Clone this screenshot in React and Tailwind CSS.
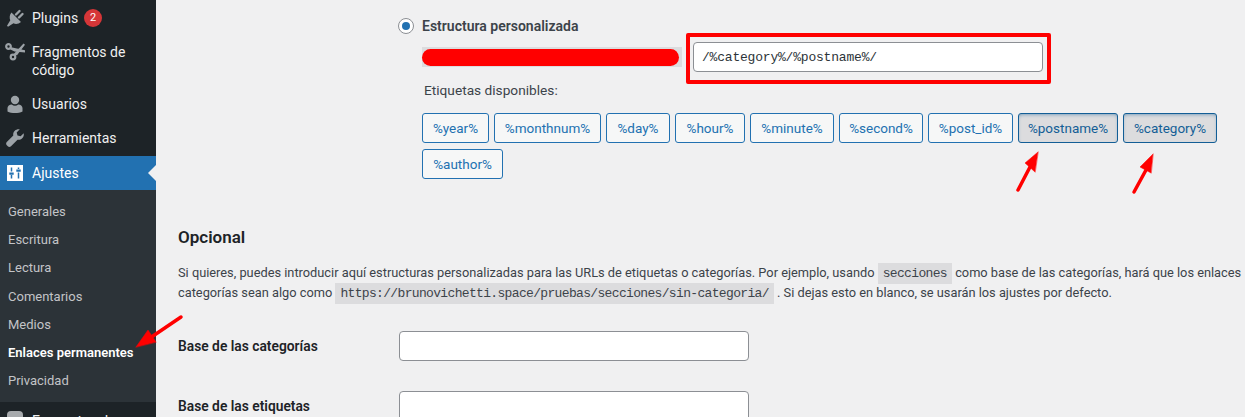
import React from "react";

const font = "font-['Roboto','Noto_Sans',sans-serif]";
const mono = "font-['Liberation_Mono','DejaVu_Sans_Mono',monospace]";

const IconPlug = () => (
  <svg className="h-5 w-5 text-[#9ca2a7]" viewBox="0 0 20 20" fill="currentColor">
    <path d="M11 6.500l3.500-3.500M14 9.500l3.500-3.500" stroke="currentColor" strokeWidth="2.400" strokeLinecap="round" />
    <path d="M6.500 4.500l9.500 9.500c-2.300 2-5.300 2.500-7.500 1.300l-5.500 3.500-1-1 3.300-5.500C4.200 10 4.500 6.700 6.500 4.500z" />
  </svg>
);
const IconScissors = () => (
  <svg className="h-5 w-5 text-[#9ca2a7]" viewBox="0 0 20 20" fill="currentColor">
    <circle cx="3.500" cy="4.500" r="2.300" fill="none" stroke="currentColor" strokeWidth="2.200" />
    <circle cx="8" cy="15" r="2.300" fill="none" stroke="currentColor" strokeWidth="2.200" />
    <path d="M5 5l15 3.200v2.300L9.500 9.500 4.500 7zM8.300 12.500L18.500 1.500l1.500 1.300-8 10.500z" />
  </svg>
);
const IconUser = () => (
  <svg className="h-5 w-5 text-[#9ca2a7]" viewBox="0 0 20 20" fill="currentColor">
    <circle cx="10" cy="6" r="4.200" />
    <path d="M2.500 17.500v-3.500c0-2 2-3.600 4.200-3.600 1 .9 2.100 1.300 3.300 1.300s2.300-.4 3.300-1.300c2.200 0 4.200 1.600 4.200 3.600v3.500c-2 1-4.800 1.500-7.500 1.500s-5.500-.5-7.500-1.500z" />
  </svg>
);
const IconWrench = () => (
  <svg className="h-5 w-5 text-[#9ca2a7]" viewBox="0 0 20 20" fill="currentColor">
    <path d="M18.700 5.200c.4 1.900-.1 3.700-1.500 5-1.300 1.300-3 1.800-4.700 1.500L6 18.200c-.9.900-2.300.9-3.200.1l-1-1c-.9-.9-.9-2.300 0-3.200l6.500-6.500c-.4-1.800.1-3.500 1.500-4.900C11.100 1.400 13 .9 14.800 1.300l-3.100 3.100.8 3.100 3.100.8z" />
  </svg>
);
const IconSettings = () => (
  <svg className="h-4 w-4 text-white" viewBox="0 0 16 16">
    <rect width="16" height="16" fill="currentColor" />
    <path d="M4.500 2.500v4M4.500 10v3.500M11.500 2.500v1.500M11.500 7.500v6" stroke="#2271b1" strokeWidth="1.500" />
    <path d="M2.300 7.500h4.400v2.200H2.300zM9.300 4.500h4.400v2.200H9.300z" fill="#2271b1" />
  </svg>
);

const menu = [
  { label: "Plugins", icon: IconPlug, cls: "h-[34px]", badge: "2" },
  { label: "Fragmentos de código", icon: IconScissors, cls: "h-[52px]" },
  { label: "Usuarios", icon: IconUser, cls: "h-[34px]" },
  { label: "Herramientas", icon: IconWrench, cls: "h-[36px]" },
];

const sub = ["Generales", "Escritura", "Lectura", "Comentarios", "Medios", "Enlaces permanentes", "Privacidad"];

const tags = [
  { t: "%year%", w: "w-[67px]" },
  { t: "%monthnum%", w: "w-[107px]" },
  { t: "%day%", w: "w-[64px]" },
  { t: "%hour%", w: "w-[70px]" },
  { t: "%minute%", w: "w-[84px]" },
  { t: "%second%", w: "w-[84px]" },
  { t: "%post_id%", w: "w-[85px]" },
  { t: "%postname%", w: "w-[100px]", on: true },
  { t: "%category%", w: "w-[94px]", on: true },
  { t: "%author%", w: "w-[81px]" },
];

const Sidebar = () => (
  <div className="w-[156px] shrink-0 bg-[#1d2327] text-[14px] leading-[18px] text-[#f0f0f1]">
    {menu.map((m) => (
      <div key={m.label} className={`flex items-start ${m.cls}`}>
        <div className="w-[32px] pl-[5px] pt-[8px] shrink-0"><m.icon /></div>
        <div className="pt-[9px] pr-4">
          {m.label}
          {m.badge && (
            <span className="ml-[6px] inline-flex h-[18px] w-[18px] items-center justify-center rounded-full bg-[#d63638] text-[11px] align-top text-white">{m.badge}</span>
          )}
        </div>
      </div>
    ))}
    <div className="relative flex h-[34px] items-center bg-[#2271b1] text-white">
      <div className="w-[32px] pl-[7px] shrink-0"><IconSettings /></div>
      <span>Ajustes</span>
      <div className="absolute right-0 top-[9px] h-0 w-0 border-y-[8px] border-r-[8px] border-y-transparent border-r-[#f0f0f1]" />
    </div>
    <div className="h-[212px] bg-[#2c3338] pt-[8px] text-[13px] text-[#c3c4c7]">
      {sub.map((s) => (
        <div key={s} className={`h-[28.200px] pl-2 leading-[28px] ${s === "Enlaces permanentes" ? "font-semibold text-white" : ""}`}>{s}</div>
      ))}
    </div>
    <div className="flex h-[34px] items-start">
      <div className="w-[32px] pl-[7px] pt-[9px] shrink-0"><div className="h-4 w-4 rounded-sm bg-[#a7aaad]" /></div>
      <span className="pt-[10px]">Encuestas de</span>
    </div>
  </div>
);

const Code = ({ children }) => (
  <code className={`bg-[#dcdcde] px-[5px] py-[3px] text-[13px] tracking-[-0.66px] text-[#3c434a] ${mono}`}>{children}</code>
);

export default function App() {
  return (
    <div className={`relative flex h-[417px] w-[1245px] overflow-hidden bg-[#f0f0f1] text-[13px] text-[#3c434a] ${font}`}>
      <Sidebar />
      <main className="min-w-0 flex-1 pl-[22px]">
        <div className="ml-[244px] pt-[16px]">
          <div className="-ml-[24px] flex h-[20px] items-center">
            <span className="flex h-4 w-4 items-center justify-center rounded-full border border-[#8c8f94] bg-white">
              <span className="h-2 w-2 rounded-full bg-[#2271b1]" />
            </span>
            <span className="ml-2 text-[14px] font-semibold">Estructura personalizada</span>
          </div>
          <div className="mt-[11px] flex h-[20px] items-center">
            <div className="h-5 w-[260px] bg-[#dcdcde] py-[2px]">
              <div className="h-[17px] w-[257px] rounded-full bg-[#ff0000]" />
            </div>
            <input
              readOnly
              value="/%category%/%postname%/"
              className={`ml-[11px] -my-[5px] h-[30px] w-[350px] shrink-0 rounded border border-[#8c8f94] bg-white px-[8px] text-[13px] tracking-[-0.2px] text-[#2c3338] ${mono}`}
            />
          </div>
          <p className="ml-[2px] mt-[13px] h-5 text-[13.700px] leading-5">Etiquetas disponibles:</p>
          <div className="mt-[13px] flex w-[800px] flex-wrap gap-x-[5px] gap-y-[6px]">
            {tags.map((b) => (
              <button
                key={b.t}
                className={`flex h-[30px] ${b.w} items-center justify-center rounded-[3px] border text-[13.500px] ${
                  b.on
                    ? "border-[#135e96] bg-[#dcdcde] text-[#135e96] shadow-[inset_0_2px_5px_-3px_#135e96]"
                    : "border-[#2271b1] bg-[#f6f7f7] text-[#2271b1]"
                }`}
              >
                {b.t}
              </button>
            ))}
          </div>
        </div>

        <h2 className="mt-[46px] h-6 text-[17px] font-semibold leading-6 text-[#1d2327]">Opcional</h2>
        <div className="mt-[14px] whitespace-nowrap text-[12.800px]">
          <p className="h-[20px] leading-[20px]">Si quieres, puedes introducir aquí estructuras personalizadas para las URLs de etiquetas o categorías. Por ejemplo, usando <Code>secciones</Code> como base de las categorías, hará que los enlaces</p>
          <p className="h-[20px] leading-[20px]">categorías sean algo como <Code>https://brunovichetti.space/pruebas/secciones/sin-categoria/</Code> . Si dejas esto en blanco, se usarán los ajustes por defecto.</p>
        </div>
        <div className="mt-[28px] flex h-[30px] items-center">
          <label className="w-[221px] text-[13.800px] font-semibold text-[#1d2327]">Base de las categorías</label>
          <input readOnly className="h-[30px] w-[350px] rounded border border-[#8c8f94] bg-white" />
        </div>
        <div className="mt-[30px] flex h-[30px] items-center">
          <label className="w-[221px] text-[13.800px] font-semibold text-[#1d2327]">Base de las etiquetas</label>
          <input readOnly className="h-[30px] w-[350px] rounded border border-[#8c8f94] bg-white" />
        </div>
      </main>

      {/* red marks over the screenshot */}
      <div className="absolute left-[686px] top-[33px] h-[51px] w-[365px] rounded-[2px] border-[4px] border-[#ff0000]" />
      <svg className="pointer-events-none absolute left-0 top-0 h-[417px] w-[1245px]" viewBox="0 0 1245 417" fill="#ff0000" stroke="#ff0000" strokeLinecap="round">
        <path d="M181 317L150 338" strokeWidth="3.500" />
        <polygon points="136,347 148,330 156,342" strokeWidth="0.500" />
        <path d="M1018 190L1030 167" strokeWidth="3.500" />
        <polygon points="1038,152 1025,163 1035,172" strokeWidth="0.500" />
        <path d="M1134 192L1146 170" strokeWidth="3.500" />
        <polygon points="1153,154 1140,167 1151,173" strokeWidth="0.500" />
      </svg>
    </div>
  );
}
